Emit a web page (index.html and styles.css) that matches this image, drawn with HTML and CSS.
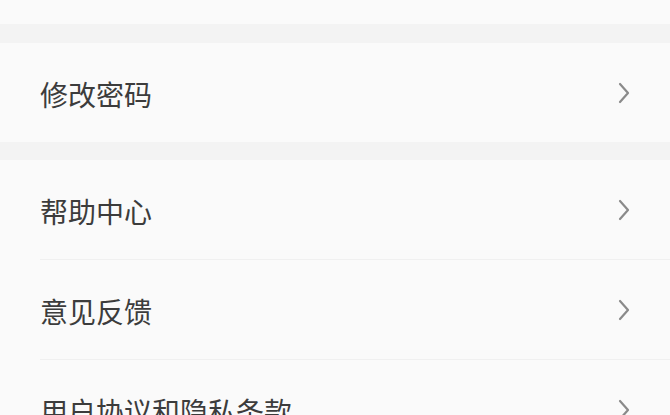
FILE: index.html
```html
<!DOCTYPE html>
<html lang="zh-CN">
<head>
<meta charset="utf-8">
<link rel="stylesheet" href="styles.css">
</head>
<body>
<div class="page">
  <div class="top"></div>
  <div class="gap"></div>
  <div class="group">
    <div class="row"><span class="label">修改密码</span><svg class="chev" viewBox="0 0 14 22"><path d="M3 2 L11 11 L3 20" /></svg></div>
  </div>
  <div class="gap gap2"></div>
  <div class="group">
    <div class="row"><span class="label">帮助中心</span><svg class="chev" viewBox="0 0 14 22"><path d="M3 2 L11 11 L3 20" /></svg></div>
    <div class="row"><span class="label">意见反馈</span><svg class="chev" viewBox="0 0 14 22"><path d="M3 2 L11 11 L3 20" /></svg></div>
    <div class="row"><span class="label">用户协议和隐私条款</span><svg class="chev" viewBox="0 0 14 22"><path d="M3 2 L11 11 L3 20" /></svg></div>
  </div>
</div>
</body>
</html>
```
FILE: styles.css
```css
html, body {
  margin: 0;
  padding: 0;
  background: #fafafa;
  overflow: hidden;
}
.page {
  width: 670px;
  font-family: "Noto Sans CJK SC", "Noto Sans", sans-serif;
}
.top {
  height: 24px;
  background: #fafafa;
}
.gap {
  height: 19px;
  background: #f3f3f3;
}
.gap2 {
  height: 18px;
}
.group {
  background: #fafafa;
  padding-left: 40px;
}
.row {
  height: 100px;
  display: flex;
  align-items: center;
  justify-content: space-between;
  padding-right: 39px;
  border-top: 1px solid #f0f0f0;
  box-sizing: border-box;
}
.group .row:first-child {
  border-top: none;
  height: 99px;
}
.label {
  font-size: 28px;
  color: #3c3c3c;
  line-height: 1;
  padding-top: 2px;
}
.chev {
  width: 14px;
  height: 22px;
  fill: none;
  stroke: #8a8a8a;
  stroke-width: 2.2;
  stroke-linecap: round;
  stroke-linejoin: round;
}
```
